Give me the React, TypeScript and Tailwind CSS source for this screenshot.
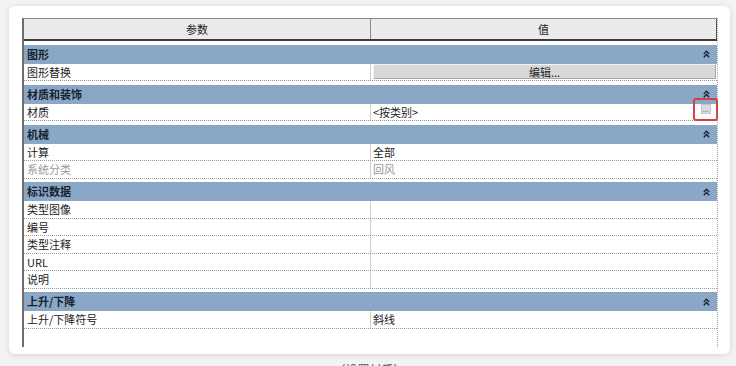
import React from 'react';

type Row =
  | { kind: 'group'; label: string }
  | { kind: 'item'; label: string; value?: string; muted?: boolean; button?: string; picker?: boolean };

const rows: Row[] = [
  { kind: 'group', label: '图形' },
  { kind: 'item', label: '图形替换', button: '编辑...' },
  { kind: 'group', label: '材质和装饰' },
  { kind: 'item', label: '材质', value: '<按类别>', picker: true },
  { kind: 'group', label: '机械' },
  { kind: 'item', label: '计算', value: '全部' },
  { kind: 'item', label: '系统分类', value: '回风', muted: true },
  { kind: 'group', label: '标识数据' },
  { kind: 'item', label: '类型图像' },
  { kind: 'item', label: '编号' },
  { kind: 'item', label: '类型注释' },
  { kind: 'item', label: 'URL' },
  { kind: 'item', label: '说明' },
  { kind: 'group', label: '上升/下降' },
  { kind: 'item', label: '上升/下降符号', value: '斜线' },
];

function Collapse() {
  return (
    <svg width="7" height="8" viewBox="0 0 7 8" className="shrink-0">
      <path d="M0.8 4 L3.5 1.2 L6.2 4" fill="none" stroke="#1b2638" strokeWidth="1.4" />
      <path d="M0.8 7.2 L3.5 4.4 L6.2 7.2" fill="none" stroke="#1b2638" strokeWidth="1.4" />
    </svg>
  );
}

function GroupRow({ label }: { label: string }) {
  return (
    <div className="mt-[3.5px] h-[19px] bg-[#8aa8c6] flex items-center justify-between pl-[3px] pr-[7px] text-[11px] font-bold text-[#17222f]">
      <span>{label}</span>
      <Collapse />
    </div>
  );
}

function ItemRow({ row }: { row: Extract<Row, { kind: 'item' }> }) {
  const tone = row.muted ? 'text-[#9a9a9a]' : 'text-[#222]';
  return (
    <div className={`h-[17.5px] flex border-b border-dotted border-[#9a9a9a] text-[11px] ${tone}`}>
      <div className="w-[346px] shrink-0 flex items-center pl-[3px]">{row.label}</div>
      <div className="flex-1 border-l border-solid border-[#d0d0d0] flex items-center pl-[2px] pr-[1px] relative">
        {row.button ? (
          <div className="w-full h-[15px] bg-[#d9d9d9] border border-solid border-t-[#f2f2f2] border-l-[#f2f2f2] border-b-[#a8a8a8] border-r-[#a8a8a8] flex items-center justify-center text-[#222]">
            {row.button}
          </div>
        ) : (
          <span>{row.value}</span>
        )}
        {row.picker && (
          <div className="absolute right-[-1px] top-[-6px] w-[25px] h-[23px] border-2 border-solid border-[#d6404a] rounded-[3px] flex items-center justify-center">
            <div className="w-[10px] h-[10px] bg-[#dcdcdc] border border-solid border-[#c4c4c4] flex items-end justify-center text-[7px] leading-[7px] text-[#666]">
              ...
            </div>
          </div>
        )}
      </div>
    </div>
  );
}

export default function App() {
  return (
    <div
      className="w-[736px] h-[366px] bg-[#f3f3f3] overflow-hidden pt-[6px] pl-[9px] pr-[6px]"
      style={{ fontFamily: '"Noto Sans CJK SC", "Noto Sans", sans-serif' }}
    >
      <div className="w-[721px] h-[348px] bg-white rounded-[6px] shadow-[0_1px_6px_rgba(0,0,0,0.12)] pt-[12px] pl-[13px] pr-[12px]">
        <div className="w-[696px] h-[329px] border-l-2 border-l-[#6e6e6e] border-t border-t-[#8a8a8a] border-r border-r-[#a8a8a8] [border-right-style:dotted] flex flex-col">
          <div className="h-[22px] shrink-0 flex bg-[#ebebeb] border-b-2 border-[#3a3a3a] text-[11px] text-[#222]">
            <div className="w-[346px] shrink-0 flex items-center justify-center">参数</div>
            <div className="flex-1 border-l border-[#8a8a8a] border-r border-r-[#555] flex items-center justify-center">值</div>
          </div>
          {rows.map((r, i) =>
            r.kind === 'group' ? <GroupRow key={i} label={r.label} /> : <ItemRow key={i} row={r} />
          )}
        </div>
      </div>
      <div className="mt-[7px] text-center text-[12px] text-[#555]">（设置材质）</div>
    </div>
  );
}
